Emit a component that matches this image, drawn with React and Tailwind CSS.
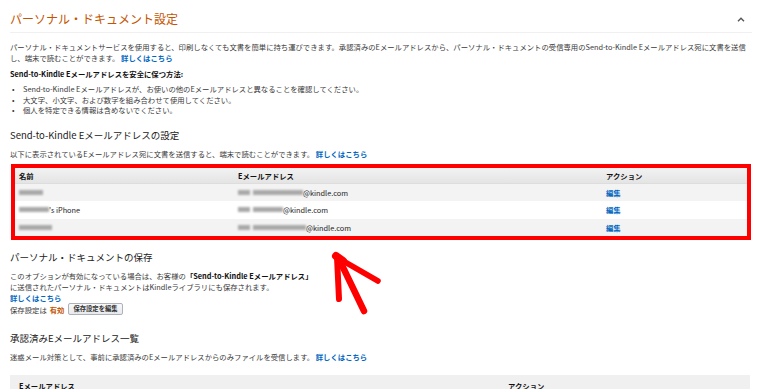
import React from "react";

const Blur = ({ w }) => (
  <span className={`inline-block h-[5px] bg-[#a9a9a9] blur-[1.2px] align-middle ${w}`} />
);

const Link = ({ children }) => (
  <a className="text-[#0066c0] font-bold">{children}</a>
);

const rows = [
  { name: <Blur w="w-[24px]" />, mail: <><Blur w="w-[12px]" /><span className="inline-block w-[3px]" /><Blur w="w-[50px]" /></>, bg: "bg-[#f3f3f3]" },
  { name: <><Blur w="w-[30px]" />'s iPhone</>, mail: <><Blur w="w-[12px]" /><span className="inline-block w-[3px]" /><Blur w="w-[30px]" /></>, bg: "bg-white" },
  { name: <Blur w="w-[33px]" />, mail: <><Blur w="w-[12px]" /><span className="inline-block w-[3px]" /><Blur w="w-[53px]" /></>, bg: "bg-[#f3f3f3]" },
];

export default function App() {
  return (
    <div
      className="relative w-[760px] h-[389px] overflow-hidden bg-white text-[#3a3a3a] pl-[10px] pr-[8px]"
      style={{ fontFamily: '"Noto Sans CJK JP", "Noto Sans", sans-serif' }}
    >
      {/* header */}
      <div className="flex items-center justify-between pt-[10px] pb-[4px] border-b border-[#f0f0f0]">
        <h1 className="text-[12px] leading-[18px] text-[#c45500]">パーソナル・ドキュメント設定</h1>
        <svg width="8" height="5" viewBox="0 0 8 5" className="mr-[7px]">
          <polyline points="1,4.2 4,1.2 7,4.2" fill="none" stroke="#555" strokeWidth="1.4" />
        </svg>
      </div>

      <div className="text-[7.35px] leading-[11px] whitespace-nowrap">
        <p className="mt-[8px]">
          パーソナル・ドキュメントサービスを使用すると、印刷しなくても文書を簡単に持ち運びできます。承認済みのEメールアドレスから、パーソナル・ドキュメントの受信専用のSend-to-Kindle Eメールアドレス宛に文書を送信
          <br />
          し、端末で読むことができます。 <Link>詳しくはこちら</Link>
        </p>
        <p className="mt-[5px] font-bold text-[#111]">Send-to-Kindle Eメールアドレスを安全に保つ方法:</p>
        <ul className="mt-[5px] leading-[10.5px]">
          {[
            "Send-to-Kindle Eメールアドレスが、お使いの他のEメールアドレスと異なることを確認してください。",
            "大文字、小文字、および数字を組み合わせて使用してください。",
            "個人を特定できる情報は含めないでください。",
          ].map((t) => (
            <li key={t} className="flex">
              <span className="w-[13px] pl-[2px]">•</span>
              {t}
            </li>
          ))}
        </ul>
      </div>

      {/* Send-to-Kindle section */}
      <h2 className="mt-[12.5px] text-[9.5px] leading-[14px] text-[#222]">Send-to-Kindle Eメールアドレスの設定</h2>
      <p className="mt-[5.5px] text-[7.35px] leading-[11px] whitespace-nowrap">
        以下に表示されているEメールアドレス宛に文書を送信すると、端末で読むことができます。 <Link>詳しくはこちら</Link>
      </p>

      <div className="mt-[5.5px] ml-[1px] w-[740px] border-[4px] border-[#ff0000] text-[7.35px] text-[#222]">
        <div className="grid grid-cols-[223px_367px_1fr] h-[16px] items-center font-bold text-[#111] bg-gradient-to-b from-[#f2f2f2] to-[#e4e4e4] border-b border-[#ddd]">
          <div className="pl-[4px]">名前</div>
          <div>Eメールアドレス</div>
          <div className="pl-[1px]">アクション</div>
        </div>
        {rows.map((r, i) => (
          <div key={i} className={`grid grid-cols-[223px_367px_1fr] items-center ${i === 1 ? "h-[18px]" : "h-[17px]"} ${r.bg}`}>
            <div className="pl-[4px] flex items-center">{r.name}</div>
            <div className="flex items-center">
              {r.mail}
              <span>@kindle.com</span>
            </div>
            <div className="pl-[1px]">
              <Link>編集</Link>
            </div>
          </div>
        ))}
      </div>

      {/* storage */}
      <h2 className="mt-[10px] text-[9.5px] leading-[14px] text-[#222]">パーソナル・ドキュメントの保存</h2>
      <div className="mt-[5.5px] text-[7.35px] leading-[11px] whitespace-nowrap">
        <p>
          このオプションが有効になっている場合は、お客様の<b className="text-[#111]">「Send-to-Kindle Eメールアドレス」</b>
        </p>
        <p>に送信されたパーソナル・ドキュメントはKindleライブラリにも保存されます。</p>
        <p>
          <Link>詳しくはこちら</Link>
        </p>
        <div className="flex items-center h-[13px]">
          保存設定は<span className="ml-[3px] font-bold text-[#c45500]">有効</span>
          <button className="ml-[4px] h-[12px] px-[4px] text-[6.3px] leading-[10px] font-bold text-[#333] border border-[#adb1b8] rounded-[2px] bg-gradient-to-b from-[#f7f8fa] to-[#e7e9ec]">
            保存設定を編集
          </button>
        </div>
      </div>

      {/* approved list */}
      <h2 className="mt-[15px] text-[9.5px] leading-[14px] text-[#222]">承認済みEメールアドレス一覧</h2>
      <p className="mt-[6.5px] text-[7.35px] leading-[11px] whitespace-nowrap">
        迷惑メール対策として、事前に承認済みのEメールアドレスからのみファイルを受信します。 <Link>詳しくはこちら</Link>
      </p>
      <div className="mt-[12.5px] w-[740px] h-[22px] grid grid-cols-[498px_1fr] items-center bg-[#f0f0f0] text-[7.35px] font-bold text-[#111]">
        <div className="pl-[9px]">Eメールアドレス</div>
        <div>アクション</div>
      </div>

      {/* hand-drawn arrow annotation */}
      <svg className="absolute left-[330px] top-[250px]" width="60" height="70" viewBox="0 0 60 70">
        <g fill="none" stroke="#ff0000" strokeLinecap="round" strokeLinejoin="round">
          <path d="M7 7 L9 49" strokeWidth="6" />
          <path d="M8 8 L48 31" strokeWidth="5.5" />
          <path d="M9 9 L34 61" strokeWidth="6.5" />
          <path d="M6 6 L13 11" strokeWidth="8" />
        </g>
      </svg>
    </div>
  );
}
